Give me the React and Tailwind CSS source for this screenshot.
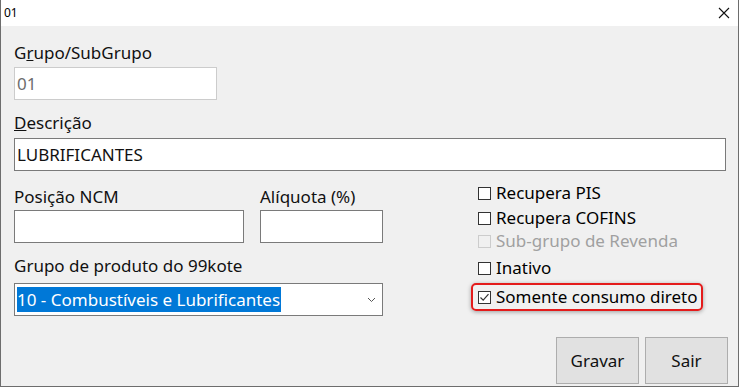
import React from "react";

// dialog "01" — grupo/subgrupo editor

const font = { fontFamily: '"Noto Sans", "Open Sans", sans-serif' };

function Box({ checked, disabled }) {
  return (
    <span
      className={`w-[13px] h-[13px] border flex items-center justify-center shrink-0 ${
        disabled ? "border-[#cccccc] bg-[#f0f0f0]" : "border-[#333333] bg-white"
      }`}
    >
      {checked && (
        <svg width="11" height="11" viewBox="0 0 11 11">
          <path d="M1.5 5.5 L4.2 8.2 L9.5 2.2" fill="none" stroke="#333" strokeWidth="1.2" />
        </svg>
      )}
    </span>
  );
}

function Check({ label, checked, disabled, className = "" }) {
  return (
    <div className={`flex items-center h-[22px] gap-[5px] ${className}`}>
      <Box checked={checked} disabled={disabled} />
      <span className={`leading-[22px] whitespace-nowrap ${disabled ? "text-[#a0a0a0]" : "text-black"}`}>
        {label}
      </span>
    </div>
  );
}

export default function App() {
  return (
    <div
      className="w-[739px] h-[387px] border-x border-b border-[#6d6d6d] flex flex-col text-[17px] text-[#111]"
      style={font}
    >
      {/* title bar */}
      <div className="h-[26px] bg-white flex items-center justify-between pl-[3px] pr-[8px] shrink-0">
        <span className="text-[12px] leading-none text-black">01</span>
        <svg width="12" height="12" viewBox="0 0 12 12">
          <path d="M1 1 L11 11 M11 1 L1 11" stroke="#111" strokeWidth="1.1" />
        </svg>
      </div>

      <div className="flex-1 bg-[#f0f0f0] pl-[13px] pr-[12px] flex flex-col">
        <div className="mt-[16px] h-[22px] leading-[22px]">
          G<span className="underline">r</span>upo/SubGrupo
        </div>
        <div className="mt-[3px] w-[203px] h-[33px] border border-[#cccccc] bg-white flex items-center pl-[2px] text-[#6d6d6d]">
          01
        </div>

        <div className="mt-[12px] h-[22px] leading-[22px]">
          <span className="underline">D</span>escrição
        </div>
        <div className="mt-[4px] h-[33px] border border-[#7a7a7a] bg-white flex items-center pl-[2px]">
          LUBRIFICANTES
        </div>

        <div className="flex">
          <div className="w-[369px] flex flex-col">
            <div className="mt-[15px] flex gap-[16px]">
              <div className="w-[230px] flex flex-col">
                <div className="h-[22px] leading-[22px]">Posição NCM</div>
                <div className="mt-[2px] h-[33px] border border-[#7a7a7a] bg-white" />
              </div>
              <div className="w-[123px] flex flex-col">
                <div className="h-[22px] leading-[22px]">Alíquota (%)</div>
                <div className="mt-[2px] h-[33px] border border-[#7a7a7a] bg-white" />
              </div>
            </div>
            <div className="mt-[12px] h-[22px] leading-[22px]">Grupo de produto do 99kote</div>
            <div className="mt-[6px] h-[33px] border border-[#7a7a7a] bg-white flex items-center pl-[2px] pr-[6px]">
              <span className="bg-[#0078d7] text-white h-[25px] leading-[25px] pr-[1px] whitespace-nowrap">
                10 - Combustíveis e Lubrificantes
              </span>
              <svg className="ml-auto" width="9" height="6" viewBox="0 0 9 6">
                <path d="M1 1 L4.5 4.5 L8 1" fill="none" stroke="#555" strokeWidth="1" />
              </svg>
            </div>
          </div>

          <div className="ml-[88px] flex flex-col">
            <Check className="mt-[11px] pl-[7px]" label="Recupera PIS" />
            <Check className="mt-[3px] pl-[7px]" label="Recupera COFINS" />
            <Check className="mt-[1px] pl-[7px]" label="Sub-grupo de Revenda" disabled />
            <Check className="mt-[5px] pl-[7px]" label="Inativo" />
            <div className="mt-[4px] w-[232px] h-[28px] border-2 border-[#e41b1b] rounded-[5px] pl-[5px] pt-[1px] shadow-[0_1px_4px_rgba(0,0,0,0.35)]">
              <Check label="Somente consumo direto" checked />
            </div>
          </div>
        </div>

        <div className="mt-[21px] mr-[-2px] flex justify-end gap-[6px]">
          <button className="w-[83px] h-[47px] bg-[#e1e1e1] border border-[#adadad] text-[#111]">
            Gravar
          </button>
          <button className="w-[83px] h-[47px] bg-[#e1e1e1] border border-[#adadad] text-[#111]">
            Sair
          </button>
        </div>
      </div>
    </div>
  );
}
